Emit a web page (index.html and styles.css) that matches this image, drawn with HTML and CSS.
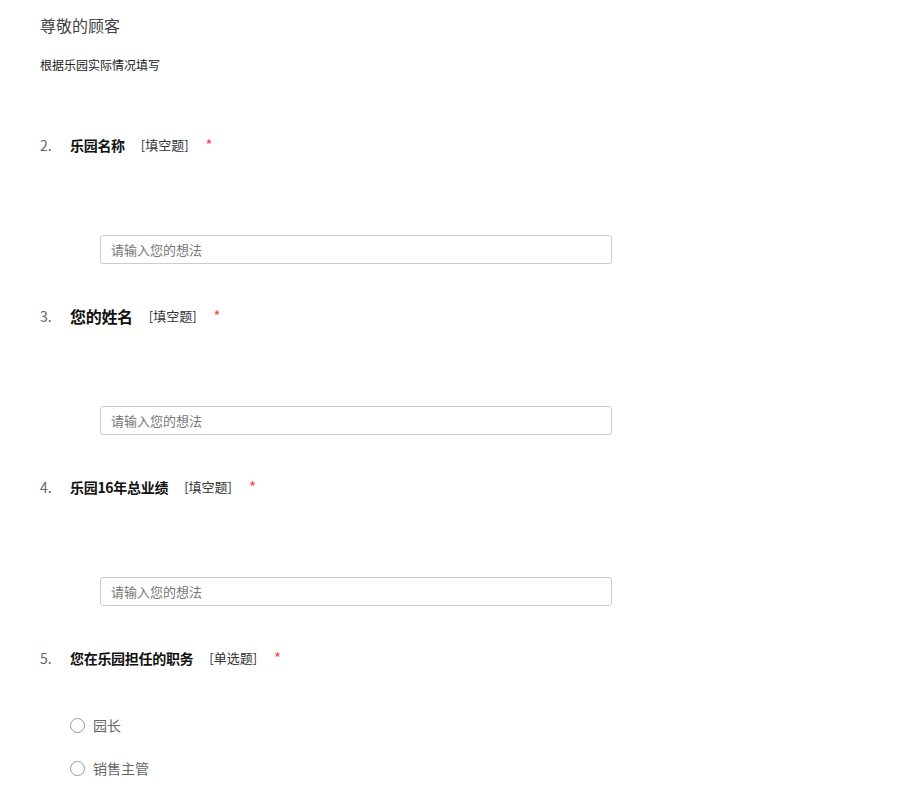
FILE: index.html
```html
<!DOCTYPE html>
<html lang="zh-CN">
<head>
<meta charset="utf-8">
<title>问卷</title>
<link rel="stylesheet" href="styles.css">
</head>
<body>
<div class="page">
  <div class="survey-title">尊敬的顾客</div>
  <div class="survey-desc">根据乐园实际情况填写</div>

  <div class="question question-first">
    <div class="q-head">
      <span class="q-num">2.</span>
      <span class="q-title">乐园名称</span>
      <span class="q-type">[填空题]</span>
      <span class="q-req">*</span>
    </div>
    <div class="q-body">
      <div class="text-input">请输入您的想法</div>
    </div>
  </div>

  <div class="question">
    <div class="q-head">
      <span class="q-num">3.</span>
      <span class="q-title q-title-lg">您的姓名</span>
      <span class="q-type">[填空题]</span>
      <span class="q-req">*</span>
    </div>
    <div class="q-body">
      <div class="text-input">请输入您的想法</div>
    </div>
  </div>

  <div class="question">
    <div class="q-head">
      <span class="q-num">4.</span>
      <span class="q-title">乐园16年总业绩</span>
      <span class="q-type">[填空题]</span>
      <span class="q-req">*</span>
    </div>
    <div class="q-body">
      <div class="text-input">请输入您的想法</div>
    </div>
  </div>

  <div class="question">
    <div class="q-head">
      <span class="q-num">5.</span>
      <span class="q-title">您在乐园担任的职务</span>
      <span class="q-type">[单选题]</span>
      <span class="q-req">*</span>
    </div>
    <div class="options">
      <label class="option"><span class="radio"></span><span class="opt-label">园长</span></label>
      <label class="option"><span class="radio"></span><span class="opt-label">销售主管</span></label>
    </div>
  </div>
</div>
</body>
</html>
```

FILE: styles.css
```css
html, body {
  margin: 0;
  padding: 0;
  background: #fff;
}
body {
  font-family: "Noto Sans CJK SC", "Noto Sans", "Liberation Sans", sans-serif;
  color: #333;
}
.page {
  padding: 14px 0 0 40px;
}
.survey-title {
  font-size: 16px;
  line-height: 22px;
  color: #444;
}
.survey-desc {
  margin-top: 20px;
  font-size: 12px;
  line-height: 18px;
  color: #222;
}
.question {
  margin-top: 42px;
}
.question-first {
  margin-top: 61px;
}
.q-head {
  display: flex;
  align-items: center;
  height: 20px;
  line-height: 20px;
}
.q-num {
  width: 30px;
  font-size: 14px;
  color: #666;
}
.q-title {
  font-size: 14px;
  font-weight: bold;
  color: #111;
  letter-spacing: -0.3px;
}
.q-title-lg {
  font-size: 16px;
}
.q-type {
  margin-left: 16px;
  font-size: 13px;
  color: #333;
}
.q-req {
  margin-left: 17px;
  font-size: 15px;
  color: #f44;
}
.q-body {
  margin-top: 80px;
  padding-left: 60px;
}
.text-input {
  box-sizing: border-box;
  width: 512px;
  height: 29px;
  border: 1px solid #ccc;
  border-radius: 3px;
  padding-left: 10px;
  font-size: 13px;
  line-height: 27px;
  color: #777;
}
.options {
  margin-top: 47px;
  padding-left: 30px;
  display: flex;
  flex-direction: column;
  gap: 23px;
}
.option {
  display: flex;
  align-items: center;
  height: 20px;
}
.radio {
  box-sizing: border-box;
  width: 15px;
  height: 15px;
  border: 1px solid #999;
  border-radius: 50%;
  background: #fff;
}
.opt-label {
  margin-left: 8px;
  font-size: 14px;
  color: #666;
}
```
